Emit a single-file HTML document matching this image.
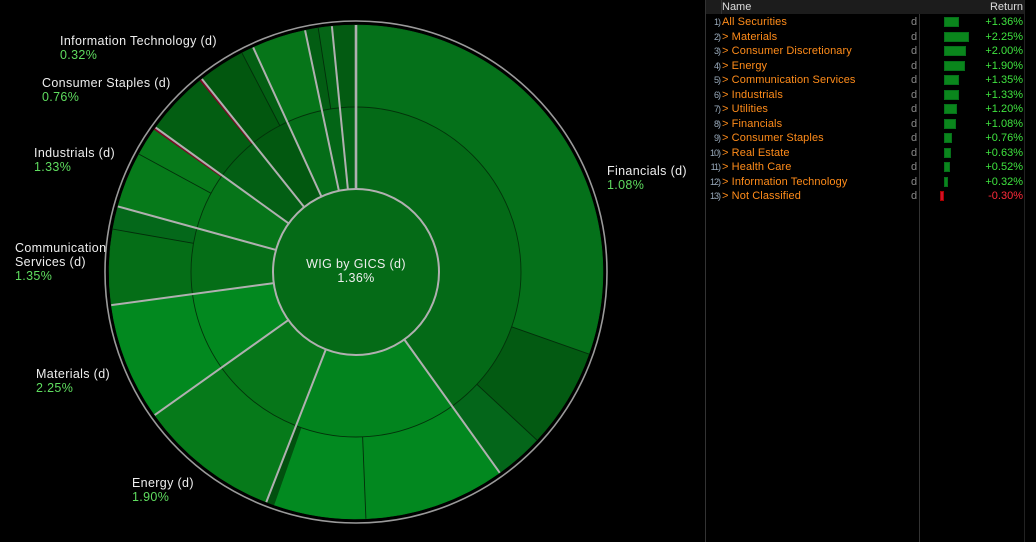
<!DOCTYPE html>
<html><head><meta charset="utf-8"><style>
html,body{margin:0;padding:0;background:#000;width:1036px;height:542px;overflow:hidden;font-family:"Liberation Sans",sans-serif}
.l{position:absolute;font-size:12.5px;letter-spacing:0.35px;line-height:14px;color:#eee;white-space:nowrap}
.p{color:#5fdc5f}
#tbl{position:absolute;left:705px;top:0;width:331px;height:542px}
.r{position:absolute;left:0;width:331px;height:14px;font-size:11px;line-height:14px;white-space:nowrap}
.n{position:absolute;right:316px;color:#9ab;font-size:9px;letter-spacing:-1px}
.t{position:absolute;left:17px;color:#ff8c1a;letter-spacing:0.1px}
.d{position:absolute;left:206px;color:#888}
.b{position:absolute;top:2px;height:10px;background:#0a861c;box-sizing:border-box;border:1px solid #06701a}
.v{position:absolute;right:13px;color:#3fe33f}
</style></head><body>
<svg id="sv" width="705" height="542" style="position:absolute;left:0;top:0"></svg>

<div class="l" style="left:60px;top:34px">Information Technology (d)<br><span class="p">0.32%</span></div>
<div class="l" style="left:42px;top:76px">Consumer Staples (d)<br><span class="p">0.76%</span></div>
<div class="l" style="left:34px;top:146px">Industrials (d)<br><span class="p">1.33%</span></div>
<div class="l" style="left:15px;top:241px">Communication<br>Services (d)<br><span class="p">1.35%</span></div>
<div class="l" style="left:36px;top:367px">Materials (d)<br><span class="p">2.25%</span></div>
<div class="l" style="left:132px;top:476px">Energy (d)<br><span class="p">1.90%</span></div>
<div class="l" style="left:607px;top:164px">Financials (d)<br><span class="p">1.08%</span></div>
<div class="l" style="left:276px;top:257px;width:160px;text-align:center">WIG by GICS (d)<br>1.36%</div>

<div id="tbl">
<div style="position:absolute;left:0;top:0;width:1px;height:542px;background:#333"></div>
<div style="position:absolute;left:214px;top:0;width:1px;height:542px;background:#333"></div>
<div style="position:absolute;left:1px;top:0;width:319px;height:14px;background:#1c1c1c"></div>
<div style="position:absolute;left:16px;top:0;width:1px;height:14px;background:#333"></div>
<div style="position:absolute;left:319px;top:0;width:1px;height:542px;background:#222"></div>
<div style="position:absolute;left:17px;top:0;font-size:11px;line-height:14px;color:#ddd">Name</div>
<div style="position:absolute;right:13px;top:0;font-size:11px;line-height:14px;color:#ddd">Return</div>
<div id="rows"></div>
</div>

<script>
var rows=[["All Securities",1.36],["&gt; Materials",2.25],["&gt; Consumer Discretionary",2.00],["&gt; Energy",1.90],["&gt; Communication Services",1.35],["&gt; Industrials",1.33],["&gt; Utilities",1.20],["&gt; Financials",1.08],["&gt; Consumer Staples",0.76],["&gt; Real Estate",0.63],["&gt; Health Care",0.52],["&gt; Information Technology",0.32],["&gt; Not Classified",-0.30]];
var h="";
rows.forEach(function(r,i){
 var top=15+i*14.5, v=r[1], w=Math.round(Math.abs(v)*11), bar;
 if(v>=0) bar='<div class="b" style="left:239px;width:'+w+'px"></div>';
 else bar='<div class="b" style="left:235px;width:4px;background:#d0102a;border-color:#a00"></div>';
 h+='<div class="r" style="top:'+top+'px"><span class="n">'+(i+1)+')</span><span class="t">'+r[0]+'</span><span class="d">d</span>'+bar+'<span class="v" style="color:'+(v<0?'#ff2a3a':'#3fe33f')+'">'+(v>=0?'+':'')+v.toFixed(2)+'%</span></div>';
});
document.getElementById('rows').innerHTML=h;

var cx=356,cy=272,R0=83,R1=165,R2=247;
function pt(r,a){a=a*Math.PI/180;return [cx+r*Math.sin(a),cy-r*Math.cos(a)];}
function wedge(r0,r1,a0,a1,c){
 var p1=pt(r1,a0),p2=pt(r1,a1),p3=pt(r0,a1),p4=pt(r0,a0),lg=(a1-a0)>180?1:0;
 return '<path d="M'+p1+' A'+r1+','+r1+' 0 '+lg+' 1 '+p2+' L'+p3+' A'+r0+','+r0+' 0 '+lg+' 0 '+p4+'Z" fill="'+c+'" stroke="'+c+'" stroke-width="0.5"/>';
}
function line(r0,r1,a,c,w){var p=pt(r0,a),q=pt(r1,a);return '<line x1="'+p[0]+'" y1="'+p[1]+'" x2="'+q[0]+'" y2="'+q[1]+'" stroke="'+c+'" stroke-width="'+w+'"/>';}
var s='';
var mid=[[0,144.4,'#046a17'],[144.4,201.3,'#02841e'],[201.3,234.6,'#067619'],[234.6,262.3,'#02891f'],[262.3,285.4,'#056e17'],[285.4,305.8,'#067519'],[305.8,321.4,'#035f14'],[321.4,335.4,'#025810'],[335.4,348.1,'#046d18'],[348.1,354.4,'#036516'],[354.4,360,'#046416']];
mid.forEach(function(m){s+=wedge(R0,R1,m[0],m[1],m[2]);});
var out=[[0,109.4,'#05711a'],[109.4,132.9,'#035a12'],[132.9,144.4,'#04661a'],[144.4,177.7,'#02881f'],[177.7,199.4,'#028a20'],[199.4,201.3,'#02500f'],[201.3,234.6,'#067a1a'],[234.6,262.3,'#02891f'],[262.3,280,'#056e17'],[280,285.4,'#04681a'],[285.4,298.5,'#067a1a'],[298.5,305.2,'#077a1a'],[305.2,305.8,'#7a0a25'],[305.8,320.8,'#035e12'],[320.8,321.4,'#7a0a25'],[321.4,332.5,'#02570f'],[332.5,335.4,'#035f13'],[335.4,348.1,'#067519'],[348.1,351.2,'#035d13'],[351.2,354.4,'#046516'],[354.4,360,'#035b12']];
out.forEach(function(m){s+=wedge(R1,R2,m[0],m[1],m[2]);});
s+='<circle cx="'+cx+'" cy="'+cy+'" r="'+R1+'" fill="none" stroke="#03330a" stroke-width="0.9"/>';
[109.4,132.9,177.7,280,298.5,332.5,351.2].forEach(function(a){s+=line(R1,R2,a,'#032e0a',0.9);});
[0,144.4,201.3,234.6,262.3,285.4,305.8,321.4,335.4,348.1,354.4].forEach(function(a){s+=line(R0,R2,a,'#b0b0b0',a==0?2.6:2);});
s+='<circle cx="'+cx+'" cy="'+cy+'" r="'+R0+'" fill="#056b17" stroke="#b0b0b0" stroke-width="2"/>';
s+='<circle cx="'+cx+'" cy="'+cy+'" r="251" fill="none" stroke="#9a9a9a" stroke-width="1.6"/>';
document.getElementById('sv').innerHTML=s;
</script>
</body></html>
